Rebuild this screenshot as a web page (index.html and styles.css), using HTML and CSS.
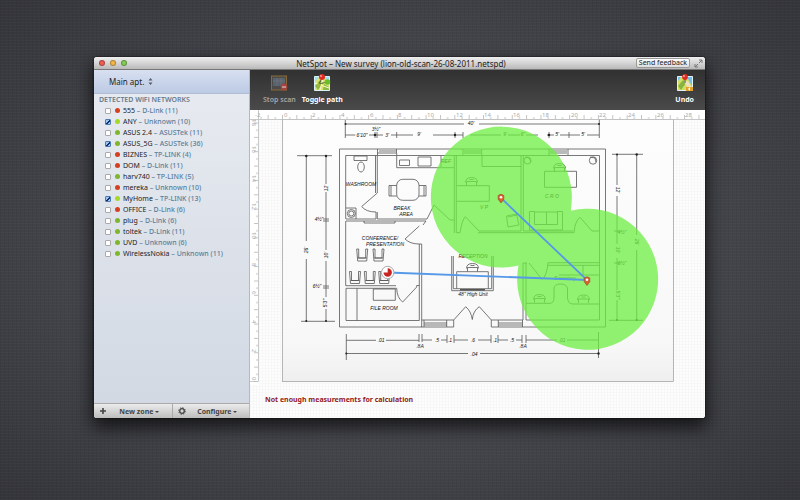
FILE: index.html
```html
<!DOCTYPE html>
<html lang="en">
<head>
<meta charset="utf-8">
<title>NetSpot</title>
<link rel="stylesheet" href="styles.css">
</head>
<body>
<main class="window">
  <header class="titlebar">
    <div class="lights">
      <button class="light red" aria-label="Close"></button>
      <button class="light amber" aria-label="Minimize"></button>
      <button class="light green" aria-label="Zoom"></button>
    </div>
    <h1>NetSpot – New survey (lion-old-scan-26-08-2011.netspd)</h1>
    <div class="title-actions">
      <button class="feedback">Send feedback</button>
      <button class="expand" aria-label="Full screen"><svg width="9" height="9" viewBox="0 0 9 9"><path d="M5 4 8 1M5 1h3v3M4 5 1 8M1 5v3h3" fill="none" stroke="#777"/></svg></button>
    </div>
  </header>
  <div class="content">
    <aside class="sidebar">
      <button class="zone">Main apt. <svg width="5" height="7" viewBox="0 0 5 7"><path d="M2.500 0 4.500 2.600h-4zM2.500 7 .5 4.400h4z" fill="#555b68"/></svg></button>
      <h2>DETECTED WiFi NETWORKS</h2>
      <ul class="networks">
        <li><label><input type="checkbox"><i class="dot r"></i>555 <span>– D-Link (11)</span></label></li>
        <li><label><input type="checkbox" checked><i class="dot l"></i>ANY <span>– Unknown (10)</span></label></li>
        <li><label><input type="checkbox"><i class="dot"></i>ASUS 2.4 <span>– ASUSTek (11)</span></label></li>
        <li><label><input type="checkbox" checked><i class="dot"></i>ASUS_5G <span>– ASUSTek (36)</span></label></li>
        <li><label><input type="checkbox"><i class="dot r"></i>BIZNES <span>– TP-LINK (4)</span></label></li>
        <li><label><input type="checkbox"><i class="dot r"></i>DOM <span>– D-Link (11)</span></label></li>
        <li><label><input type="checkbox"><i class="dot"></i>harv740 <span>– TP-LINK (5)</span></label></li>
        <li><label><input type="checkbox"><i class="dot r"></i>mereka <span>– Unknown (10)</span></label></li>
        <li><label><input type="checkbox" checked><i class="dot l"></i>MyHome <span>– TP-LINK (13)</span></label></li>
        <li><label><input type="checkbox"><i class="dot r"></i>OFFICE <span>– D-Link (6)</span></label></li>
        <li><label><input type="checkbox"><i class="dot"></i>plug <span>– D-Link (6)</span></label></li>
        <li><label><input type="checkbox"><i class="dot"></i>toltek <span>– D-Link (11)</span></label></li>
        <li><label><input type="checkbox"><i class="dot"></i>UVD <span>– Unknown (6)</span></label></li>
        <li><label><input type="checkbox"><i class="dot"></i>WirelessNokia <span>– Unknown (11)</span></label></li>
      </ul>
      <footer class="bar">
        <button><svg width="8" height="8" viewBox="0 0 8 8"><path d="M4 1v6M1 4h6" stroke="#444" stroke-width="1.600"/></svg><span>New zone <i class="caret"></i></span></button>
        <button><svg width="8" height="8" viewBox="0 0 8 8"><circle cx="4" cy="4" r="2.300" fill="none" stroke="#444" stroke-width="1.300"/><circle cx="4" cy="4" r="3.300" fill="none" stroke="#444" stroke-dasharray="1.300 1.290"/></svg><span>Configure <i class="caret"></i></span></button>
      </footer>
    </aside>
    <section class="survey">
      <nav class="toolbar">
        <button class="tool disabled">
          <svg width="18" height="18" viewBox="0 0 18 18"><rect x="1.500" y="2" width="15" height="14" fill="#4b4b4b" stroke="#8a6a36"/><path d="M3 4h12v8H3z" fill="#59616a"/><path d="M3 7h12M7 4v8M11 4v8" stroke="#737b83" stroke-width=".6"/><circle cx="14" cy="13" r="3.400" fill="#a5443c"/><path d="M12 13h4" stroke="#ddd" stroke-width="1.200"/></svg>
          Stop scan</button>
        <button class="tool">
          <svg width="18" height="18" viewBox="0 0 18 18"><path d="M1.500 2.500h15v14h-15z" fill="#dbe46c" stroke="#d9f1fb"/><path d="M2 3h4L2 8zM11 3h5v8z" fill="#a5daf5"/><path d="M2 12 7 6l3 3-5 7zM11 10l5 3v3h-6z" fill="#8cb944"/><path d="m2 9 14 5M7 16l3-12" stroke="#fff9d0"/><path d="M9 4 6 10l8-2" fill="none" stroke="#333" stroke-width=".7"/><circle cx="9" cy="3" r="3" fill="#dd2d24"/><circle cx="14.500" cy="8" r="2.800" fill="#6abf27"/><circle cx="8" cy="2" r=".9" fill="#ffaca0"/><circle cx="6" cy="11" r="1.800" fill="#9db62c"/></svg>
          Toggle path</button>
        <button class="tool last">
          <svg width="18" height="18" viewBox="0 0 18 18"><path d="M1.500 2.500h15v14h-15z" fill="#d3de62" stroke="#e3f3fa"/><path d="M2 3h3L2 7zM11 3h5v9z" fill="#71bdeb"/><path d="m2 12 5-6 3 3-5 7z" fill="#86b541"/><path d="m8 8 4-1 4 7-3 2z" fill="#f0e0bb"/><path d="M10 13h7v4h-7z" fill="#e1a12b"/><path d="m12 15 2-2v4z" fill="#fff"/><path d="M9 4v5" stroke="#555"/><circle cx="9" cy="3" r="2.900" fill="#dd2d24"/><circle cx="8" cy="2" r=".9" fill="#ffaca0"/></svg>
          Undo</button>
      </nav>
      <div class="canvas">
        <svg class="plan" viewBox="250 110 455 275" role="img" aria-label="Floor plan">
          <defs>
            <pattern id="tx" x="282" y="110" width="14.360" height="9" patternUnits="userSpaceOnUse"><path d="M.5 5v4M7.700 7v2" stroke="#aaa" stroke-width=".7"/></pattern>
            <pattern id="ty" x="250" y="381" width="8" height="14.360" patternUnits="userSpaceOnUse"><path d="M4 .5h4M6 7.700h2" stroke="#aaa" stroke-width=".7"/></pattern>
            <linearGradient id="paper" x2="0" y2="1"><stop offset="0" stop-color="#fdfdfd"/><stop offset=".85" stop-color="#f8f8f8"/><stop offset="1" stop-color="#efefef"/></linearGradient>
            <g id="seat"><path d="M0 0 1 12h9L11 0M2 0v9h7V0M2 0H0M11 0H9M1 9h9"/></g>
            <g id="chair"><path d="M1 8V4h10v4M0 5Q0 0 6 0t6 5M4 2h4"/></g>
            <g id="pin"><path d="M0 5-2.800 1.200V-2.500Q0-5 2.800-2.500V1.200z" fill="#d9622f" stroke="#9a4a2a" stroke-width=".6"/><circle cy="-.8" r="1.300" fill="#fff"/></g>
          </defs>
          <rect x="282.500" y="119" width="391" height="262.500" fill="url(#paper)" stroke="#999" stroke-width=".7"/>
          <g class="ink">
            <path d="M339.500 149H605.500V327H523M339.500 149V327H422M345.700 155.500H599.500V320H526V263M345.700 155.500V219M345.700 221V285.700H396M346 288.300V320.500H419.300V244"/>
            <path d="M377.500 149v4h19v-4M377.500 153v2M396.700 153v2M379 151h17M463 149v6M481.700 149v6M464 151h17M464 153h17M549 149v6M568 149v6M550 151h17M550 153h17"/>
            <path d="M375.500 155.500V193M377.300 155.500V193L361.700 206.500Q366 212 376 212V219H346M377.300 212v7H427l7-14 16 15h4M346 221h80l-3 4M364 221v2h31v-2"/>
            <path d="M354 156h13v4.500h-13zM346 208h10v11"/><ellipse cx="361" cy="167" rx="3.300" ry="5"/><circle cx="351.300" cy="213.500" r="4"/><circle cx="351.300" cy="213.500" r="2.500"/>
            <path d="M396.700 155.500v12.200H454M399.500 160h10v5.500h-10zM418 157h13v9h-13zM441 156v11"/>
            <rect x="396.700" y="179.300" width="22.300" height="21" rx="6"/><path d="M396.700 185.500H389v10.500h7.700M391 186v10M419 185.500h7v10.500h-7M424 186v10"/>
            <path d="M454.300 155.500V233M456.300 155.500V232.700H460Q462 220 465.300 216.700L479 231H521M478 232.700H574Q575 221 580 217.300L592 231H599M521 155.500V231M523.300 155.500V231H573M482 155.500v11h39"/>
            <path d="M456.700 185.700h32.600v15.600h-32.600M506.500 216l10-2 2.500 11-11 2zM508 217l9-2M544.500 171.300h32v16h-32z"/>
            <path d="M529.500 211.500h5v13h23v-13h5v18.500h-33zM534.500 212h23M546.500 212v13"/><circle cx="527.500" cy="160.500" r="3.500"/><circle cx="593" cy="160.500" r="3.700"/><path d="m525 157 4 1 2 4M590 157l5 1 1 4"/>
            <use href="#chair" x="465.500" y="177.500"/><use href="#chair" x="553.500" y="163.500"/>
            <path d="M421.700 244v83M419.300 226 405 239Q410 244 419.300 244h2.400"/>
            <use href="#seat" x="356.700" y="249"/><use href="#seat" x="373" y="249"/><use href="#seat" x="349.500" y="271.500"/><use href="#seat" x="364.300" y="271.500"/><use href="#seat" x="378.700" y="271.500"/>
            <path d="M346 288.300H396.700Q397 298 402.700 302L416.700 287V285.500h2.600M357 288.300V320.500M373.300 289h22v11.300h-22z"/>
            <path d="M421.700 320H453.700L465.700 306.700Q471 311 472.300 319.500 473 311 479.300 306.700L491.300 320H523V263h4M421.700 327H453.700V320M446.700 320v7M424 320v7M491.300 320v7H523M498.300 320v7M522.500 320v7M424 323h23M424 325h23M498.300 323h24M498.300 325h24"/>
            <path d="M451.700 256v34.700h41.600V256M453.300 256v32.700h38.400V256M456.700 288.700v-17h31.600v17"/><use href="#chair" x="466.500" y="263.500"/>
            <path d="M460 289.800h25" stroke-width="1.600"/>
            <path d="M599 262.700H548Q547 276 542 279.300L529 263M599 265.300H548M559 275h40M583 265v10M526 303.300h24Q554 303 554 298V289Q554 284 560.500 284T567.500 289V298Q568 304 573 304h26"/>
            <use href="#chair" x="533.500" y="294.500"/><use href="#chair" x="577.500" y="295"/>
            <path d="M345.300 120v18M345.300 124H464M479 124H599.300M599.300 119v19M345.300 135h10M369 135h14M391 135h22M433 135h30M470 135h31M508 135h12M526 135h12M547 135h7M560 135h20M587 135h12M375 132v6M377 132v6M396.700 132v6M455 132v6M463 132v6M549 132v6M569 132v6"/>
            <path d="M297 155.700h35M306.300 156V241M306.300 259V321.300M326 156V184M326 192V250M326 261V297M326 309v12M301 321.300h34M323 219h6M323 221h6M323 286h6M323 288h6"/>
            <path d="M612 154.300h31M617 154.300V185M617 196V244M617 258V290M617 300v20M636.700 154.300V235M636.700 250v70M609 320.300h34M614 231h6M614 263h6"/>
            <path d="M346.300 334v26M346.300 340.300H376M386 340.300h33M346.300 353.500H468M480 353.500H599M598.500 332v26M419 334v8M422 334v8M422 340h10M441 340h6M454 340h14M478 340h13M498 340h10M516 340h6M526 340h31M567 340h31M447 335v8M454 335v8M491 335v8M498 335v8M522 335v8M526 335v8"/>
          </g>
          <g class="dots"><circle cx="306.300" cy="156" r="1.200"/><circle cx="326" cy="156" r="1.200"/><circle cx="345.500" cy="124" r="1"/><circle cx="599" cy="124" r="1"/><circle cx="617" cy="154.500" r="1"/><circle cx="636.700" cy="154.500" r="1.200"/><circle cx="306.300" cy="321" r="1"/><circle cx="326" cy="321" r="1"/><circle cx="617" cy="320" r="1"/><circle cx="636.700" cy="320" r="1"/><circle cx="346.300" cy="353.500" r="1"/><circle cx="598.500" cy="353.500" r="1.200"/><circle cx="375" cy="135" r="1.200"/><circle cx="455" cy="135" r="1.200"/><circle cx="549" cy="135" r="1.200"/></g>
          <g class="hand">
            <text x="361" y="186">WASHROOM</text><text x="402" y="210">BREAK</text><text x="406" y="216">AREA</text><text x="380" y="240">CONFERENCE/</text><text x="385" y="246">PRESENTATION</text><text x="384" y="310">FILE ROOM</text><text x="484" y="209">V P</text><text x="552" y="198">C R O</text><text x="473" y="258">RECEPTION</text><text x="473" y="296">48" High Unit</text><text x="565" y="280">Secretary</text><text x="446" y="163">REF</text>
            <text x="471" y="125">40'</text><text x="362" y="137">6'10"</text><text x="376" y="131">3½"</text><text x="387" y="137">3'</text><text x="419" y="136">9'</text><text x="505" y="136">9'</text><text x="523" y="136">6"</text><text x="557" y="136">5'</text><text x="583" y="136">5'</text>
            <text x="381" y="342">.01</text><text x="420" y="348">.8A</text><text x="437" y="342">.5</text><text x="450" y="342">.1</text><text x="473" y="342">.6</text><text x="495" y="342">.1</text><text x="512" y="342">.5</text><text x="523" y="348">.8A</text><text x="562" y="342">.01</text><text x="474" y="356">.04</text>
            <text transform="translate(308 250)rotate(-90)">26'</text><text transform="translate(328 188)rotate(-90)">12'</text><text x="319" y="221">4½"</text><text transform="translate(328 255)rotate(-90)">10'</text><text x="317" y="288">6½"</text><text transform="translate(327 303)rotate(-90)">5'3"</text><text transform="translate(616 190)rotate(90)">12'</text><text transform="translate(635 242)rotate(90)">26'</text><text x="622" y="234">4½"</text><text transform="translate(616 250)rotate(90)">10'</text><text x="622" y="265">6½"</text><text transform="translate(616 295)rotate(90)">5'3"</text>
          </g>
          <path d="M571 208A70.500 70.500 0 1 0 518.500 265.500 70.500 70.500 0 1 0 571 210.800z" fill="#6cee40" fill-opacity=".74"/>
          <path d="M388 272.500 587 280 501 198" fill="none" stroke="#5599e8" stroke-width="1.800"/>
          <use href="#pin" x="501" y="198"/><use href="#pin" x="587" y="280.500"/>
          <circle cx="387.700" cy="272.500" r="6.200" fill="#fff" stroke="#aaa"/><path d="M387.700 272.500V268.300A4.200 4.200 0 1 1 383.500 272.500z" fill="#c92424"/>
          <rect x="250" y="110" width="455" height="9" fill="#fff"/><rect x="250" y="110" width="8" height="275" fill="#fff"/>
          <rect x="258" y="110" width="447" height="9" fill="url(#tx)"/><rect x="250" y="119" width="8" height="263" fill="url(#ty)"/>
          <path d="M250 119.500H705M258.500 110V381.500M250 381.500h8" fill="none" stroke="#bbb" stroke-width=".8"/>
          <g class="scale">
            <text x="255" y="117">-2</text><text x="284" y="117">0</text><text x="312" y="117">2</text><text x="341" y="117">4</text><text x="370" y="117">6</text><text x="398" y="117">8</text><text x="427" y="117">10</text><text x="456" y="117">12</text><text x="484" y="117">14</text><text x="513" y="117">16</text><text x="542" y="117">18</text><text x="571" y="117">20</text><text x="599" y="117">22</text><text x="628" y="117">24</text><text x="657" y="117">26</text><text x="685" y="117">28</text>
            <text transform="translate(252 119)rotate(90)">18</text><text transform="translate(252 146)rotate(90)">16</text><text transform="translate(252 175)rotate(90)">14</text><text transform="translate(252 203)rotate(90)">12</text><text transform="translate(252 232)rotate(90)">10</text><text transform="translate(252 263)rotate(90)">8</text><text transform="translate(252 291)rotate(90)">6</text><text transform="translate(252 320)rotate(90)">4</text><text transform="translate(252 349)rotate(90)">2</text><text transform="translate(252 377)rotate(90)">0</text>
          </g>
        </svg>
        <p class="notice">Not enough measurements for calculation</p>
      </div>
    </section>
  </div>
</main>
</body>
</html>
```
FILE: styles.css
```css
* { box-sizing: border-box; }
body {
  margin: 0;
  min-height: 100vh;
  display: flex;
  padding: 57px 95px 82px 94px;
  font: 7px/11px "Noto Sans", "Open Sans", sans-serif;
  color: #222;
  background:
    repeating-linear-gradient(0deg, #ffffff05 0 1px, transparent 1px 3px),
    repeating-linear-gradient(90deg, #0000000c 0 1px, transparent 1px 4px),
    radial-gradient(ellipse at 50% 50%, #4c4d53 0, #46474d 50%, #34353a 100%);
}
button {
  font: inherit;
  color: inherit;
  border: 0;
  padding: 0;
  background: none;
}
h1, h2, p, ul { margin: 0; padding: 0; font: inherit; }
.window {
  flex: 1;
  display: flex;
  flex-direction: column;
  border-radius: 3px;
  overflow: hidden;
  background: #fff;
  box-shadow: 0 0 2px #000, 0 8px 18px 2px #000a;
}
.titlebar {
  height: 13px;
  display: grid;
  grid-template-columns: 1fr auto 1fr;
  align-items: center;
  padding: 0 2px 0 5px;
  background: linear-gradient(#efefef, #b9b9b9);
  border-bottom: 1px solid #777;
}
.titlebar h1 { font-size: 8px; }
.lights { display: flex; gap: 5px; }
.light { width: 6px; height: 6px; border-radius: 50%; border: 1px solid #0004; }
.red { background: #ee5c54; }
.amber { background: #f3b548; }
.green { background: #82cc55; }
.title-actions { display: flex; justify-content: flex-end; align-items: center; gap: 4px; }
.feedback {
  height: 10px;
  line-height: 8px;
  padding: 0 2px;
  border: 1px solid #999;
  border-radius: 2px;
  background: linear-gradient(#fff, #ddd);
}
.expand, .expand svg { display: block; }
.content { flex: 1; display: flex; }
.sidebar {
  width: 156px;
  display: flex;
  flex-direction: column;
  background: linear-gradient(#e8ebf1, #d1d8e2);
  border-right: 1px solid #b5bac2;
}
.zone {
  height: 24px;
  display: flex;
  align-items: center;
  gap: 4px;
  padding: 0 15px;
  font-size: 8px;
  background: linear-gradient(#d8e0f1, #bccae4);
  border-bottom: 1px solid #b0bdd5;
}
h2 { padding: 0 5px; color: #66798c; font-weight: 600; }
.networks { flex: 1; list-style: none; }
.networks label { height: 11px; display: flex; align-items: center; padding-left: 11px; white-space: pre; }
.networks span { color: #5b7f9b; font-weight: 500; }
.networks input {
  appearance: none;
  width: 6px;
  height: 6px;
  margin: 0 4px 0 0;
  border: 1px solid #aaa;
  border-radius: 1px;
  background: #fff;
}
.networks input:checked {
  border-color: #4d79b5;
  background: linear-gradient(135deg, transparent 50%, #12306a 50% 75%, transparent 75%), #9dc5f2;
}
.dot { width: 5px; height: 5px; border-radius: 50%; margin-right: 3px; background: #7fb62c; }
.r { background: #d6401f; }
.l { background: #a4d92a; }
.bar {
  height: 15px;
  display: grid;
  grid-template-columns: 1fr 1fr;
  background: linear-gradient(#ececec, #bdbdbd);
  border-top: 1px solid #aaa;
  font-weight: bold;
  color: #444;
}
.bar button { display: flex; align-items: center; padding-left: 5px; }
.bar button + button { border-left: 1px solid #aaa; }
.bar span { flex: 1; text-align: center; }
.caret {
  display: inline-block;
  border: 2px solid transparent;
  border-top-color: #444;
  border-bottom: 0;
  vertical-align: 1px;
}
.survey { flex: 1; display: flex; flex-direction: column; }
.toolbar {
  height: 40px;
  display: flex;
  gap: 6px;
  padding: 4px 11px 0 13px;
  background: linear-gradient(#313131, #4a4a4a);
  color: #fff;
  font-weight: bold;
}
.tool { display: flex; flex-direction: column; align-items: center; gap: 2px; height: 32px; }
.disabled { color: #a5a5a5; font-weight: 600; }
.last { margin-left: auto; }
.canvas { flex: 1; background: repeating-linear-gradient(90deg, #f7f7f7 0 1px, transparent 1px 3px), repeating-linear-gradient(#f8f8f8 0 1px, #fdfdfd 1px 3px); }
.plan { display: block; width: 100%; }
.ink { fill: none; stroke: #555; stroke-width: .8; }
.dots { fill: #222; }
.hand { font: italic 5px "Liberation Sans", sans-serif; text-anchor: middle; fill: #111; }
.scale { font-size: 6px; fill: #aaa; }
.notice { padding: 9px 15px; font-weight: bold; color: #931c1c; }
```
